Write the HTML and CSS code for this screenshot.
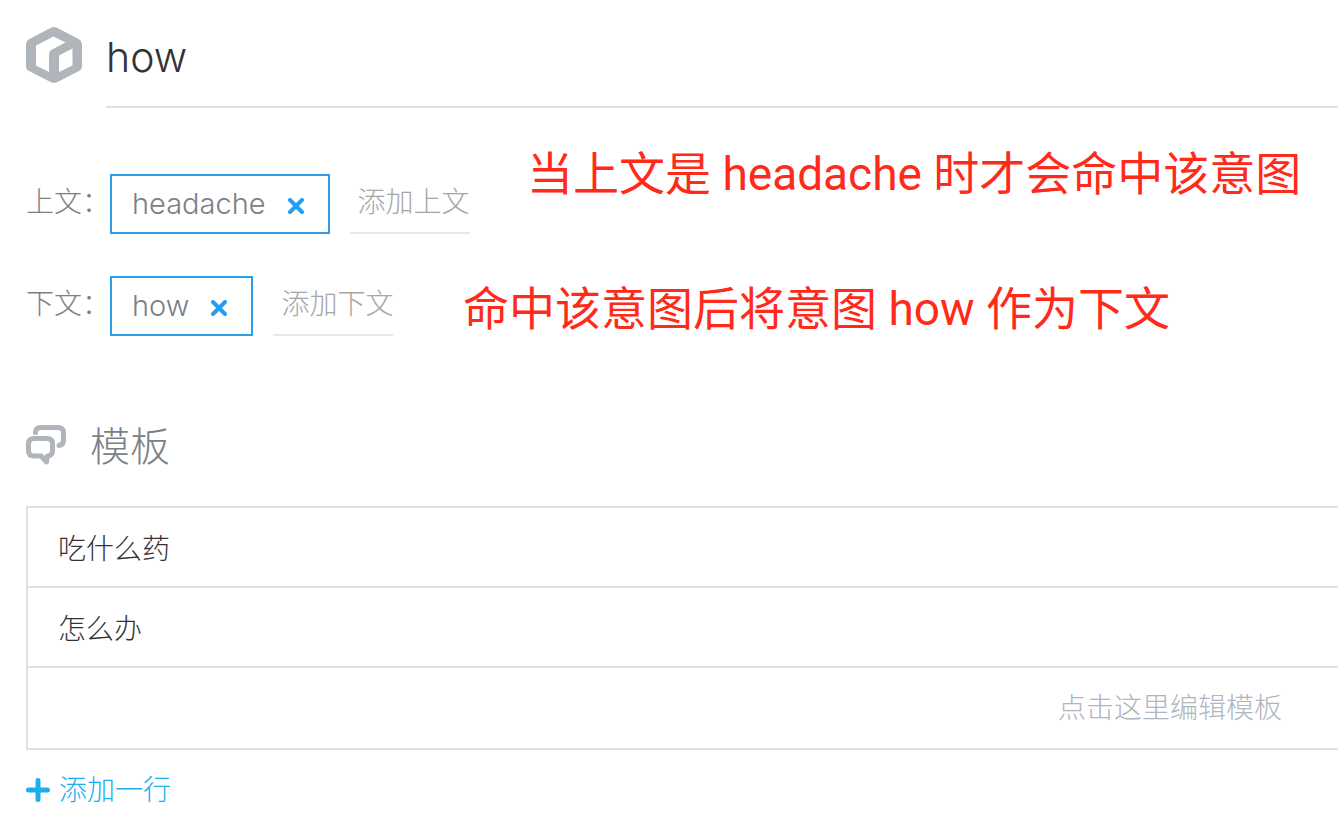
FILE: index.html
```html
<!DOCTYPE html>
<html lang="zh-CN">
<head>
<meta charset="utf-8">
<title>how</title>
<link rel="stylesheet" href="styles.css">
</head>
<body>
<main class="page">
  <header class="header">
    <svg class="header-icon" viewBox="0 0 56 56" aria-hidden="true">
      <path fill="#b0b5bc" fill-rule="evenodd" d="M25 .700Q28-.700 31 .700L53 12.200Q56 14 56 17V39Q56 42.500 53 44L31 55.300Q28 56.700 25 55.300L3 44Q0 42.500 0 39V17Q0 14 3 12.200ZM27.500 9.500L10 18.500V38.500L23 45V27.500Q23 24 26 22.500L39.500 15.500ZM46.500 21.500L33 28.500V45L46.500 38.500Z"/>
    </svg>
    <input class="title" type="text" value="how" aria-label="意图名称">
  </header>

  <section class="contexts">
    <div class="context">
      <label class="context-label" for="context-in">上文：</label>
      <span class="tag">headache
        <button class="tag-remove" type="button" aria-label="移除 headache"><svg class="cross" viewBox="0 0 16 16" aria-hidden="true"><path d="M2 2L14 14M14 2L2 14"/></svg></button>
      </span>
      <input class="context-input" id="context-in" type="text" placeholder="添加上文">
      <p class="note note-in">当上文是 headache 时才会命中该意图</p>
    </div>
    <div class="context">
      <label class="context-label" for="context-out">下文：</label>
      <span class="tag">how
        <button class="tag-remove" type="button" aria-label="移除 how"><svg class="cross" viewBox="0 0 16 16" aria-hidden="true"><path d="M2 2L14 14M14 2L2 14"/></svg></button>
      </span>
      <input class="context-input" id="context-out" type="text" placeholder="添加下文">
      <p class="note note-out">命中该意图后将意图 how 作为下文</p>
    </div>
  </section>

  <section class="templates">
    <h2 class="heading">
      <svg class="heading-icon" viewBox="0 0 40 40" aria-hidden="true">
        <g fill="none" stroke="#b0b5bc" stroke-width="5" stroke-linecap="round" stroke-linejoin="round">
          <path d="M9.500 7.500Q9.500 2.500 14.500 2.500H32Q37.500 2.500 37.500 8V15Q37.500 20 33 20.500"/>
          <path d="M8 13.500H21Q26.500 13.500 26.500 19V25.500Q26.500 30.500 21 31.500L20.500 37L15 31H8Q2.500 31 2.500 25.500V19Q2.500 13.500 8 13.500Z"/>
        </g>
        <path fill="#b0b5bc" d="M15 31L20.500 38L22 31Z"/>
      </svg>
      模板
    </h2>
    <div class="rows">
      <input class="row" type="text" value="吃什么药" aria-label="模板 1">
      <input class="row" type="text" value="怎么办" aria-label="模板 2">
      <input class="row row-new" type="text" placeholder="点击这里编辑模板" aria-label="新模板">
    </div>
    <button class="add" type="button">
      <svg class="plus" viewBox="0 0 24 24" aria-hidden="true"><path d="M12 2.500V21.500M2.500 12H21.500"/></svg>
      添加一行
    </button>
  </section>
</main>
</body>
</html>
```

FILE: styles.css
```css
* {
  box-sizing: border-box;
}

body {
  margin: 0;
  background: #fff;
  color: #333;
  font-family: Inter, "Noto Sans CJK SC", sans-serif;
  font-size: 28px;
  font-weight: 300;
  line-height: 40px;
}

input,
button {
  margin: 0;
  padding: 0;
  border: 0;
  border-radius: 0;
  background: transparent;
  color: inherit;
  font: inherit;
  outline: 0;
}

button {
  cursor: pointer;
}

.page {
  padding: 8px 0 16px 26px;
}

.header {
  display: flex;
  align-items: flex-start;
  gap: 24px;
}

.header-icon {
  flex: none;
  width: 56px;
  height: 56px;
  margin-top: 19px;
}

.title {
  flex: 1;
  min-width: 0;
  height: 100px;
  border-bottom: 2px solid #dedfe0;
  font-size: 41px;
}

.contexts {
  display: flex;
  flex-direction: column;
  gap: 42px;
  padding-top: 66px;
}

.context {
  position: relative;
  display: flex;
  color: #7b8088;
}

.context-label {
  width: 84px;
  padding-top: 8px;
  white-space: nowrap;
}

.tag {
  display: flex;
  align-items: center;
  gap: 22px;
  height: 60px;
  margin-right: 20px;
  padding: 0 24px 0 20px;
  border: 2px solid #2b9fee;
  font-size: 29px;
}

.tag-remove {
  display: flex;
  padding-top: 4px;
}

.cross {
  width: 16px;
  height: 16px;
  fill: none;
  stroke: #239ff2;
  stroke-width: 4;
  stroke-linecap: round;
}

.context-input {
  width: 120px;
  height: 60px;
  padding: 0 0 2px 8px;
  border-bottom: 2px solid #e7e7e7;
}

.context-input::placeholder {
  color: #a6a6a6;
  opacity: 1;
}

.note {
  position: absolute;
  margin: 0;
  color: #ff2a1a;
  font-family: Roboto, "Noto Sans CJK SC", sans-serif;
  font-size: 46px;
  font-weight: 400;
  line-height: 60px;
  white-space: nowrap;
}

.note-in {
  top: -30px;
  left: 501px;
}

.note-out {
  top: 3px;
  left: 437px;
}

.heading {
  display: flex;
  align-items: center;
  gap: 24px;
  margin: 80px 0 28px;
  color: #7b8088;
  font-size: 40px;
  font-weight: 300;
  line-height: 62px;
}

.heading-icon {
  width: 40px;
  height: 40px;
  margin-bottom: 4px;
}

.rows {
  display: flex;
  flex-direction: column;
  border: 2px solid #dedfe0;
  border-right: 0;
}

.row {
  height: 80px;
  padding: 0 56px 0 30px;
  border-bottom: 2px solid #dedfe0;
}

.row-new {
  border-bottom: 0;
  text-align: right;
}

.row-new::placeholder {
  color: #afb6c1;
  opacity: 1;
}

.add {
  display: flex;
  align-items: center;
  gap: 9px;
  margin-top: 20px;
  color: #1eaef0;
}

.plus {
  width: 24px;
  height: 24px;
  fill: none;
  stroke: #1eaef0;
  stroke-width: 5;
  stroke-linecap: round;
}
```
